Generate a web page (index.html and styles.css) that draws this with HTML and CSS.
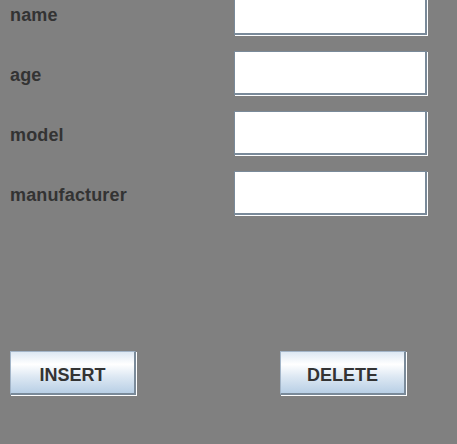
FILE: index.html
```html
<!DOCTYPE html>
<html>
<head>
<meta charset="utf-8">
<link rel="stylesheet" href="styles.css">
</head>
<body>
<div class="form">
  <div class="label">name</div>
  <div class="field"></div>
  <div class="label">age</div>
  <div class="field"></div>
  <div class="label">model</div>
  <div class="field"></div>
  <div class="label">manufacturer</div>
  <div class="field"></div>
</div>
<div class="buttons">
  <div class="btn">INSERT</div>
  <div class="btn">DELETE</div>
</div>
</body>
</html>
```
FILE: styles.css
```css
html, body {
  margin: 0;
  padding: 0;
  background: #808080;
  overflow: hidden;
}
body {
  width: 457px;
  height: 444px;
  font-family: "Liberation Sans", Arial, sans-serif;
  font-weight: bold;
  font-size: 18px;
  color: #333333;
}
.form {
  display: grid;
  grid-template-columns: 224px 193px;
  grid-auto-rows: 44px;
  row-gap: 16px;
  padding-left: 10px;
  margin-top: -9px;
}
.label {
  align-self: center;
  line-height: 21px;
  margin-top: 4px;
  letter-spacing: 0.15px;
}
.field {
  box-sizing: border-box;
  height: 44px;
  background: #ffffff;
  border-top: 1px solid #7a8a99;
  border-left: 1px solid #7a8a99;
  border-right: 2px solid #7a8a99;
  border-bottom: 2px solid #7a8a99;
  box-shadow: 1px 1px 0 0 #ffffff;
}
.buttons {
  display: flex;
  gap: 144px;
  padding-left: 10px;
  margin-top: 136px;
}
.btn {
  box-sizing: border-box;
  width: 126px;
  height: 44px;
  display: flex;
  align-items: center;
  justify-content: center;
  padding-top: 5px;
  border-top: 1px solid #a3b5c8;
  border-left: 1px solid #a3b5c8;
  border-right: 2px solid #7a8a99;
  border-bottom: 2px solid #7a8a99;
  box-shadow: 1px 1px 0 0 #ffffff;
  background: linear-gradient(to bottom, #dde8f3 0%, #ffffff 30%, #dde8f3 60%, #b8cfe5 100%);
}
```
